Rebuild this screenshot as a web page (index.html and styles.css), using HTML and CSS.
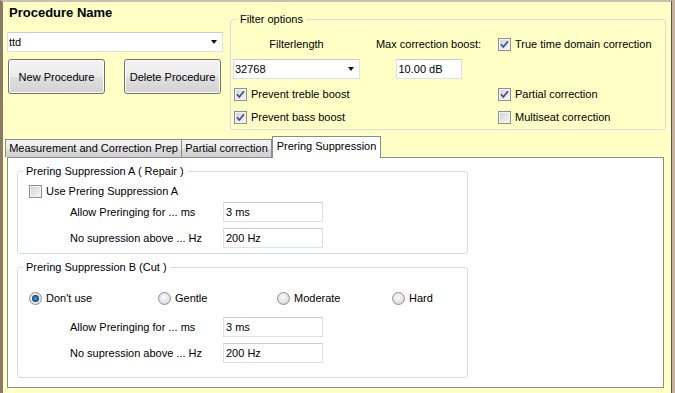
FILE: index.html
```html
<!DOCTYPE html>
<html lang="en">
<head>
    <meta charset="UTF-8">
    <title>Procedure Settings</title>
    <link rel="stylesheet" href="styles.css">
</head>
<body>

    <div class="window">
        <div class="top">

            <!-- Procedure selection -->
            <div class="procedure">
                <div class="title">Procedure Name</div>
                <div class="combo"><span>ttd</span><span class="arrow"></span></div>
                <div class="buttons">
                    <button class="btn">New Procedure</button>
                    <button class="btn">Delete Procedure</button>
                </div>
            </div>

            <!-- Filter options -->
            <fieldset class="group filter">
                <legend>Filter options</legend>
                <div class="filter-grid">
                    <div class="caption">Filterlength</div>
                    <div class="caption">Max correction boost:</div>
                    <label class="check"><span class="box"><svg width="11" height="11" viewBox="0 0 11 11"><path d="M2 5.3 L4.3 8 L9 2.2" /></svg></span>True time domain correction</label>

                    <div class="combo"><span>32768</span><span class="arrow"></span></div>
                    <div class="center"><div class="field boost">10.00 dB</div></div>
                    <div></div>

                    <label class="check"><span class="box"><svg width="11" height="11" viewBox="0 0 11 11"><path d="M2 5.3 L4.3 8 L9 2.2" /></svg></span>Prevent treble boost</label>
                    <div></div>
                    <label class="check"><span class="box"><svg width="11" height="11" viewBox="0 0 11 11"><path d="M2 5.3 L4.3 8 L9 2.2" /></svg></span>Partial correction</label>

                    <label class="check"><span class="box"><svg width="11" height="11" viewBox="0 0 11 11"><path d="M2 5.3 L4.3 8 L9 2.2" /></svg></span>Prevent bass boost</label>
                    <div></div>
                    <label class="check"><span class="box"></span>Multiseat correction</label>
                </div>
            </fieldset>
        </div>

        <!-- Tabs -->
        <div class="tabs">
            <div class="tab tab-prep">Measurement and Correction Prep</div>
            <div class="tab tab-partial">Partial correction</div>
            <div class="tab tab-prering active">Prering Suppression</div>
        </div>

        <div class="panel">
            <fieldset class="group prering group-a">
                <legend>Prering Suppression A ( Repair )</legend>
                <label class="check use-a"><span class="box"></span>Use Prering Suppression A</label>
                <div class="rows">
                    <span>Allow Preringing for ... ms</span>
                    <div class="field">3 ms</div>
                    <span>No supression above ... Hz</span>
                    <div class="field">200 Hz</div>
                </div>
            </fieldset>

            <fieldset class="group prering group-b">
                <legend>Prering Suppression B (Cut )</legend>
                <div class="radios">
                    <label class="option"><span class="radio on"></span>Don't use</label>
                    <label class="option"><span class="radio"></span>Gentle</label>
                    <label class="option"><span class="radio"></span>Moderate</label>
                    <label class="option"><span class="radio"></span>Hard</label>
                </div>
                <div class="rows">
                    <span>Allow Preringing for ... ms</span>
                    <div class="field">3 ms</div>
                    <span>No supression above ... Hz</span>
                    <div class="field">200 Hz</div>
                </div>
            </fieldset>
        </div>
    </div>

</body>
</html>
```

FILE: styles.css
```css
body {
    margin: 0;
    background-color: #c4b29e;
    font-family: "Liberation Sans", Arial, sans-serif;
    font-size: 11px;
    color: #000;
    overflow: hidden;
}
.window {
    width: 672px;
    height: 393px;
    box-sizing: border-box;
    background-color: #ffffc6;
    border-left: 3px solid #8b7a69;
    border-top: 2px solid #c8beb1;
    border-right: 1px solid #5e5248;
    padding: 3px 0 0 4px;
}
.top {
    display: flex;
    align-items: flex-start;
}
.procedure {
    width: 216px;
}
.title {
    font-size: 13px;
    font-weight: bold;
    line-height: 16px;
    padding-left: 2px;
}

/* inputs */
.combo, .field {
    box-sizing: border-box;
    height: 20px;
    background-color: #fff;
    border: 1px solid #dde1e6;
    border-top-color: #c9cdd3;
    display: flex;
    align-items: center;
    padding: 0 5px 0 1px;
    white-space: nowrap;
}
.procedure .combo {
    margin-top: 11px;
}
.combo {
    justify-content: space-between;
}
.arrow {
    width: 0;
    height: 0;
    border-top: 4px solid #111;
    border-left: 3.5px solid transparent;
    border-right: 3.5px solid transparent;
}
.field {
    padding-left: 2px;
}
.buttons {
    display: flex;
    justify-content: space-between;
    margin-top: 7px;
    padding: 0 2px 0 1px;
}
.btn {
    width: 97px;
    height: 35px;
    border: 1px solid #707070;
    border-radius: 3px;
    background: linear-gradient(#f3f3f3, #ebebeb 50%, #dedede 51%, #d3d3d3);
    box-shadow: inset 0 0 0 1px #fcfcfc;
    font-family: inherit;
    font-size: 11px;
    color: #000;
    padding: 0;
}

/* group boxes */
.group {
    margin: 0;
    border: 1px solid #d5dce2;
    border-radius: 3px;
    min-inline-size: 0;
}
.group legend {
    line-height: 13px;
    padding: 0 3px;
}
.filter {
    width: 436px;
    box-sizing: border-box;
    margin: 8px 0 0 7px;
    padding: 10px 0 4px 2px;
}
.filter legend {
    margin-left: 4px;
}
.filter-grid {
    display: grid;
    grid-template-columns: 127px 137px auto;
    grid-template-rows: 16px 20px 16px 16px;
    row-gap: 7px;
    align-items: center;
}
.caption {
    text-align: center;
    line-height: 16px;
}
.center {
    display: flex;
    justify-content: center;
}
.boost {
    width: 66px;
}
.filter-grid .check:first-of-type {
    margin-left: 0;
}

/* checkbox & radio */
.check, .option {
    display: flex;
    align-items: center;
    gap: 4px;
    line-height: 16px;
    white-space: nowrap;
}
.filter-grid .check {
    padding-left: 1px;
}
.box {
    width: 13px;
    height: 13px;
    box-sizing: border-box;
    border: 1px solid #8e8f8f;
    background: linear-gradient(135deg, #cfd2d7, #f7f7f7);
    box-shadow: inset 0 0 0 1px #f4f4f4;
    flex: none;
}
.box svg {
    display: block;
}
.box path {
    fill: none;
    stroke: #3c518a;
    stroke-width: 1.7;
}
.radio {
    width: 13px;
    height: 13px;
    box-sizing: border-box;
    border-radius: 50%;
    border: 1px solid #8e8f8f;
    background: radial-gradient(circle at 45% 40%, #fbfbfb, #e3e3e3 55%, #c9c9c9);
    flex: none;
}
.radio.on {
    background: radial-gradient(circle at 50% 50%, #5fa0dc 0, #1d5592 2.6px, #2a5b8e 3.4px, #f2f2f2 3.9px, #dcdcdc 5.5px);
}

/* tabs */
.tabs {
    display: flex;
    align-items: flex-end;
    height: 21px;
    margin: 6px 0 0 -2px;
}
.tab {
    box-sizing: border-box;
    height: 18px;
    line-height: 17px;
    text-align: center;
    border: 1px solid #898c95;
    border-bottom: none;
    background: linear-gradient(#f2f2f2, #ebebeb 50%, #dddddd 51%, #cfcfcf);
    white-space: nowrap;
}
.tab-prep {
    width: 177px;
}
.tab-partial {
    width: 91px;
    margin-left: -1px;
}
.tab-prering {
    width: 109px;
}
.tab.active {
    height: 22px;
    margin-bottom: -1px;
    line-height: 16px;
    padding-top: 1px;
    background: #fff;
    position: relative;
    z-index: 1;
}

/* tab page */
.panel {
    width: 657px;
    height: 231px;
    box-sizing: border-box;
    background-color: #fff;
    border: 1px solid #898c95;
    padding: 7px 0 0 9px;
}
.prering {
    width: 451px;
    box-sizing: border-box;
}
.prering legend {
    margin-left: 5px;
}
.group-a {
    padding: 5px 0 5px 0;
}
.group-b {
    margin-top: 7px;
    padding: 16px 0 14px 0;
}
.use-a {
    margin-left: 11px;
}
.rows {
    display: grid;
    grid-template-columns: 153px 100px;
    grid-auto-rows: 20px;
    row-gap: 6px;
    align-items: center;
    margin: 3px 0 0 52px;
}
.group-b .rows {
    margin-top: 11px;
}
.radios {
    display: grid;
    grid-template-columns: 129px 119px 115px auto;
    margin-left: 11px;
}
```
